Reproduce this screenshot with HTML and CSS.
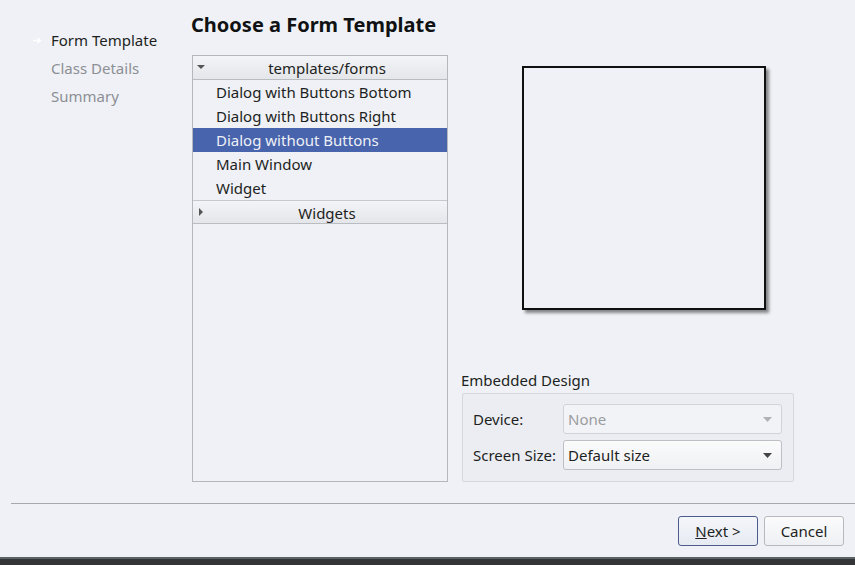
FILE: index.html
```html
<!DOCTYPE html>
<html>
<head>
<meta charset="utf-8">
<link rel="stylesheet" href="styles.css">
</head>
<body>
<div class="wizard">
  <div class="main">
    <ul class="nav">
      <li class="nav-item current"><svg class="nav-arrow" width="9" height="7" viewBox="0 0 9 7"><path d="M0 3.5 H7 M4.5 1 L7.5 3.5 L4.5 6" stroke="#ffffff" stroke-width="1.5" fill="none"/></svg>Form Template</li>
      <li class="nav-item">Class Details</li>
      <li class="nav-item">Summary</li>
    </ul>
    <div class="content">
      <h1 class="title">Choose a Form Template</h1>
      <div class="row">
        <div class="tree">
          <div class="tree-header">
            <svg class="caret" width="8" height="8" viewBox="0 0 8 8"><path d="M0 2 L8 2 L4 6 Z" fill="#555"/></svg>
            <span>templates/forms</span>
          </div>
          <div class="tree-item">Dialog with Buttons Bottom</div>
          <div class="tree-item">Dialog with Buttons Right</div>
          <div class="tree-item selected">Dialog without Buttons</div>
          <div class="tree-item">Main Window</div>
          <div class="tree-item">Widget</div>
          <div class="tree-header">
            <svg class="caret" width="8" height="8" viewBox="0 0 8 8"><path d="M2 0 L6 4 L2 8 Z" fill="#555"/></svg>
            <span>Widgets</span>
          </div>
        </div>
        <div class="side">
          <div class="preview-wrap"><div class="preview"></div></div>
          <div class="group-label">Embedded Design</div>
          <div class="group">
            <div class="form-row">
              <span class="form-label">Device:</span>
              <div class="combo disabled"><span>None</span><svg width="9" height="5" viewBox="0 0 9 5"><path d="M0 0 L9 0 L4.5 5 Z" fill="#b0b2b6"/></svg></div>
            </div>
            <div class="form-row">
              <span class="form-label">Screen Size:</span>
              <div class="combo"><span>Default size</span><svg width="9" height="5" viewBox="0 0 9 5"><path d="M0 0 L9 0 L4.5 5 Z" fill="#444"/></svg></div>
            </div>
          </div>
        </div>
      </div>
    </div>
  </div>
  <div class="separator"></div>
  <div class="buttons">
    <button class="btn default"><u>N</u>ext &gt;</button>
    <button class="btn">Cancel</button>
  </div>
  <div class="taskbar"></div>
</div>
</body>
</html>
```

FILE: styles.css
```css
* { box-sizing: border-box; }
html, body { margin: 0; padding: 0; }
body {
  width: 855px;
  height: 565px;
  background: #eff1f6;
  font-family: "Noto Sans", "Open Sans", sans-serif;
  font-size: 15px;
  color: #1d1f22;
  overflow: hidden;
}
.wizard {
  display: flex;
  flex-direction: column;
  height: 565px;
}
.main {
  display: flex;
  height: 495px;
}
.nav {
  list-style: none;
  margin: 0;
  padding: 27px 0 0 51px;
  width: 191px;
}
.nav-item {
  position: relative;
  height: 28px;
  line-height: 26px;
  color: #8c8f94;
  white-space: nowrap;
}
.nav-item.current { color: #1d1f22; }
.nav-arrow {
  position: absolute;
  left: -18px;
  top: 10px;
}
.content {
  display: flex;
  flex-direction: column;
}
.title {
  margin: 11px 0 0 0;
  font-size: 20px;
  line-height: 28px;
  font-weight: bold;
  color: #101113;
  height: 44px;
}
.row {
  display: flex;
  padding-left: 1px;
}
.tree {
  width: 256px;
  height: 427px;
  border: 1px solid #b4b7bc;
  background: #eff1f6;
}
.tree-header {
  position: relative;
  height: 24px;
  line-height: 25px;
  text-align: center;
  padding-left: 14px;
  background: linear-gradient(#f3f4f7, #e4e6ea);
  border-bottom: 1px solid #b9bcc1;
  color: #1d1f22;
}
.tree-item + .tree-header { border-top: 1px solid #c5c8cc; height: 24px; line-height: 24px; }
.caret {
  position: absolute;
  left: 4px;
  top: 7px;
}
.tree-item {
  height: 24px;
  line-height: 24px;
  padding-left: 23px;
  white-space: nowrap;
}
.tree-item.selected {
  background: #4864ad;
  color: #eef0f6;
}
.side {
  display: flex;
  flex-direction: column;
  width: 350px;
  padding-left: 13px;
}
.preview-wrap {
  height: 310px;
  padding: 11px 0 0 61px;
}
.preview {
  width: 244px;
  height: 244px;
  border: 2px solid #101010;
  background: #eff1f6;
  box-shadow: 3px 3px 3px rgba(0, 0, 0, 0.45);
}
.group-label {
  height: 28px;
  line-height: 20px;
  padding-top: 5px;
  color: #1d1f22;
}
.group {
  width: 332px;
  height: 89px;
  margin-left: 1px;
  border: 1px solid #d4d7dc;
  border-radius: 2px;
  background: #ebedf2;
  padding: 10px 11px 0 10px;
  display: flex;
  flex-direction: column;
  gap: 6px;
}
.form-row {
  display: flex;
  align-items: center;
}
.form-label {
  width: 90px;
}
.combo {
  width: 219px;
  height: 30px;
  border: 1px solid #bcbfc4;
  border-radius: 3px;
  background: linear-gradient(#fbfbfc, #f0f1f4);
  display: flex;
  align-items: center;
  justify-content: space-between;
  padding: 0 9px 0 4px;
  color: #1d1f22;
}
.combo.disabled {
  color: #9a9ca0;
  border-color: #d0d3d7;
  background: #f2f3f6;
}
.separator {
  margin: 8px 0 0 11px;
  height: 1px;
  background: #a5a8ad;
}
.buttons {
  display: flex;
  justify-content: flex-end;
  gap: 6px;
  padding: 12px 11px 0 0;
  height: 53px;
}
.btn {
  width: 80px;
  height: 30px;
  border: 1px solid #b6b9be;
  border-radius: 3px;
  background: linear-gradient(#fbfbfc, #eef0f3);
  font-family: "Noto Sans", "Open Sans", sans-serif;
  font-size: 15px;
  color: #1d1f22;
  padding: 0;
}
.btn.default {
  border-color: #4a5b8c;
  background: linear-gradient(#f4f6fa, #e6eaf2);
}
.taskbar {
  height: 8px;
  background: #333537;
  border-top: 2px solid #5b6263;
}
```
